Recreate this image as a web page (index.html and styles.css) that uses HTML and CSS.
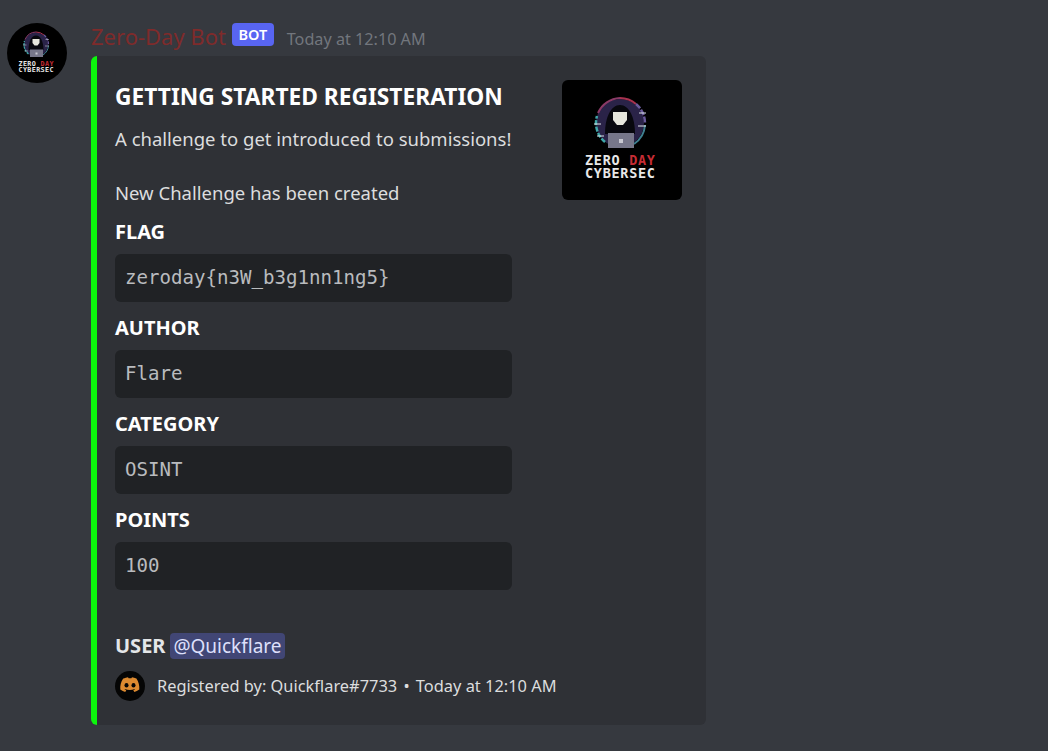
FILE: index.html
```html
<!DOCTYPE html>
<html lang="en">
<head>
<meta charset="utf-8">
<title>Zero-Day Bot</title>
<link rel="stylesheet" href="styles.css">
</head>
<body>
<svg class="defs" width="0" height="0" aria-hidden="true">
  <defs>
    <symbol id="logo" viewBox="0 0 120 120">
      <circle cx="58" cy="43" r="24" fill="#2a2348"/>
      <path d="M43 62A24.500 24.500 0 0 1 35 36" fill="none" stroke="#3fa7a8" stroke-width="2.500" stroke-dasharray="5 1.500"/>
      <path d="M36 33A25 25 0 0 1 58 18" fill="none" stroke="#8a3a66" stroke-width="2"/>
      <path d="M58 18A25 25 0 0 1 74 24" fill="none" stroke="#a8324f" stroke-width="2"/>
      <path d="M74 24A25 25 0 0 1 83 43" fill="none" stroke="#6a5a9c" stroke-width="2.500" stroke-dasharray="6 1.500"/>
      <path d="M83 45A25 25 0 0 1 72 64" fill="none" stroke="#3f7f90" stroke-width="2"/>
      <path d="M32 44h7M77 33h7M76 46h8M35 56h7" stroke="#dfe6ea" stroke-width="1"/>
      <path d="M43 54c0-17 6-29 15-29s15 12 15 29z" fill="#08080e"/>
      <path d="M51 32h14v8l-4 5h-6l-4-5z" fill="#e6e6dc"/>
      <rect x="46" y="53" width="26" height="15" fill="#77778a"/>
      <rect x="57" y="59" width="4" height="4" fill="#c9c9d2"/>
      <text class="logo-text" x="58" y="85" text-anchor="middle" textLength="70"><tspan fill="#e8e8e8">ZERO </tspan><tspan fill="#c62c34">DAY</tspan></text>
      <text class="logo-text" x="58" y="98" text-anchor="middle" textLength="70" fill="#e8e8e8">CYBERSEC</text>
    </symbol>
  </defs>
</svg>
<main class="message">
  <div class="avatar"><svg class="avatar-logo" viewBox="0 0 120 120"><use href="#logo"/></svg></div>
  <div class="content">
    <header class="head">
      <span class="name">Zero-Day Bot</span>
      <span class="badge">BOT</span>
      <time class="stamp">Today at 12:10 AM</time>
    </header>
    <article class="embed">
      <div class="top">
        <div class="body">
          <h2 class="title">GETTING STARTED REGISTERATION</h2>
          <p class="desc">A challenge to get introduced to submissions!</p>
          <p class="desc second">New Challenge has been created</p>
          <h3 class="label">FLAG</h3>
          <div class="code">zeroday{n3W_b3g1nn1ng5}</div>
          <h3 class="label">AUTHOR</h3>
          <div class="code">Flare</div>
          <h3 class="label">CATEGORY</h3>
          <div class="code">OSINT</div>
          <h3 class="label">POINTS</h3>
          <div class="code">100</div>
        </div>
        <div class="thumb"><svg class="thumb-logo" viewBox="0 0 120 120"><use href="#logo"/></svg></div>
      </div>
      <p class="user"><strong>USER</strong> <span class="mention">@Quickflare</span></p>
      <footer class="foot">
        <span class="foot-icon">
          <svg viewBox="0 0 30 30" width="30" height="30">
            <circle cx="15" cy="15" r="15" fill="#050505"/>
            <g transform="translate(0 -.700)">
              <path d="M8.600 8.200c1.600-.7 3-1.100 4.400-1.300l.6 1.100c.9-.1 1.900-.1 2.800 0l.6-1.100c1.400.2 2.800.6 4.400 1.300 2.200 3.300 3.200 6.900 2.900 11-1.700 1.200-3.300 2-4.900 2.500l-1.100-1.800c.6-.2 1.200-.5 1.800-.9l-.4-.3c-3.200 1.400-6.600 1.400-9.800 0l-.4.3c.6.4 1.200.7 1.800.9l-1.100 1.800c-1.700-.5-3.200-1.300-4.900-2.500-.3-3.900.6-7.600 2.900-11z" fill="#dd8a30"/>
              <ellipse cx="11.500" cy="15" rx="2" ry="2.200" fill="#050505"/>
              <ellipse cx="18.500" cy="15" rx="2" ry="2.200" fill="#050505"/>
            </g>
          </svg>
        </span>
        <span class="foot-text">Registered by: Quickflare#7733 <span class="dot">•</span> Today at 12:10 AM</span>
      </footer>
    </article>
  </div>
</main>
</body>
</html>
```
FILE: styles.css
```css
html, body {
  margin: 0;
  height: 100%;
  overflow: hidden;
}
body {
  background: #36393f;
  font-family: "Noto Sans", "Open Sans", sans-serif;
  color: #dcddde;
}
.defs {
  display: block;
  height: 0;
}
.message {
  display: flex;
  gap: 24px;
  padding: 23px 0 0 7px;
}
.avatar {
  width: 60px;
  height: 60px;
  border-radius: 50%;
  background: #000;
  overflow: hidden;
  flex: none;
}
.avatar-logo {
  display: block;
  width: 60px;
  height: 60px;
}
.logo-text {
  font-family: "DejaVu Sans Mono", monospace;
  font-size: 13.500px;
  font-weight: 700;
}
.content {
  width: 615px;
}
.head {
  display: flex;
  align-items: baseline;
  height: 33px;
}
.name {
  font-size: 22px;
  line-height: 26px;
  color: #7f2b2b;
}
.badge {
  margin-left: 6px;
  padding: 0 6.500px;
  height: 23px;
  line-height: 22px;
  font-size: 14.500px;
  font-weight: 600;
  color: #fff;
  background: #5865f2;
  border-radius: 4px;
  align-self: flex-start;
}
.stamp {
  margin-left: 13px;
  font-size: 16.200px;
  color: #72767d;
}
.embed {
  background: #2f3136;
  border-left: 6px solid #0cf50c;
  border-radius: 6px;
  padding: 24px 24px 24px 18px;
}
.top {
  display: flex;
  justify-content: space-between;
}
.body {
  width: 397px;
}
.title {
  margin: 0;
  font-size: 22.750px;
  line-height: 33px;
  font-weight: 700;
  color: #fff;
  white-space: nowrap;
}
.desc {
  margin: 13px 0 0;
  font-size: 18.500px;
  line-height: 26px;
  white-space: nowrap;
}
.second {
  margin-top: 28px;
}
.label {
  margin: 13px 0 0;
  font-size: 20px;
  line-height: 26px;
  font-weight: 700;
  color: #fff;
}
.code {
  margin-top: 9px;
  height: 48px;
  line-height: 48px;
  padding: 0 10px;
  border-radius: 6px;
  background: #202225;
  font-family: "DejaVu Sans Mono", monospace;
  font-size: 19.100px;
  color: #b9bbbe;
}
.thumb {
  width: 120px;
  height: 120px;
  background: #000;
  border-radius: 6px;
  overflow: hidden;
}
.thumb-logo {
  display: block;
  width: 120px;
  height: 120px;
}
.user {
  margin: 42px 0 0;
  font-size: 19px;
  line-height: 28px;
}
.user strong {
  font-size: 20px;
  font-weight: 700;
  color: #e4e6e8;
}
.mention {
  padding: 0 3px;
  border-radius: 4px;
  background: #414675;
  color: #dee0fc;
}
.foot {
  display: flex;
  align-items: center;
  gap: 12px;
  margin-top: 11px;
}
.foot-icon {
  display: block;
  width: 30px;
  height: 30px;
}
.foot-icon svg {
  display: block;
}
.foot-text {
  padding-bottom: 2px;
  font-size: 16.400px;
  color: #dcddde;
}
.dot {
  margin: 0 2px;
}
```
